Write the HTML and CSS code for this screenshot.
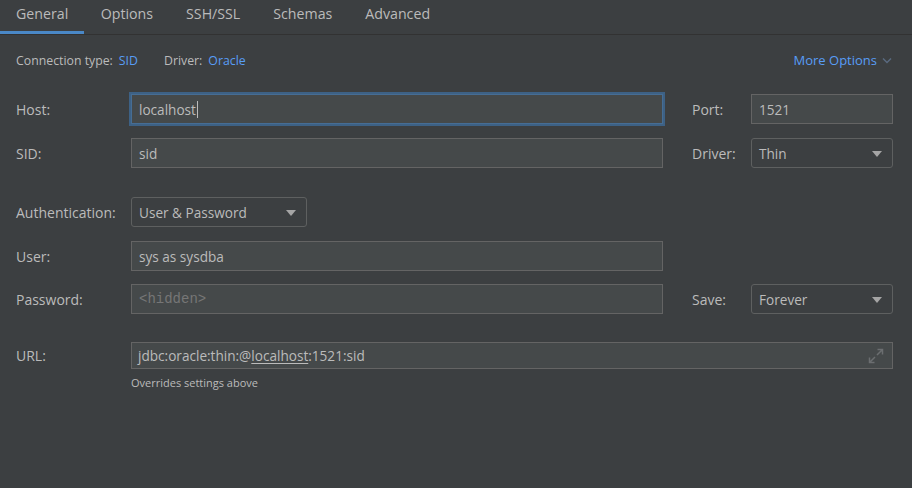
FILE: index.html
```html
<!DOCTYPE html>
<html>
<head>
<meta charset="utf-8">
<link rel="stylesheet" href="styles.css">
</head>
<body>
<div class="tabs">
  <div class="tab active">General</div>
  <div class="tab">Options</div>
  <div class="tab">SSH/SSL</div>
  <div class="tab">Schemas</div>
  <div class="tab">Advanced</div>
</div>
<div class="content">
  <div class="info">
    <span class="lbl">Connection type:</span><span class="link">SID</span>
    <span class="lbl lbl2">Driver:</span><span class="link">Oracle</span>
    <span class="more">More Options
      <svg class="chev" width="10" height="7" viewBox="0 0 10 7"><path d="M1 1.5 L5 5.5 L9 1.5" fill="none" stroke="#5a6a80" stroke-width="1.4"/></svg>
    </span>
  </div>
  <div class="form">
    <div class="label r1">Host:</div>
    <div class="field focus r1">localhost<span class="caret"></span></div>
    <div class="label2 r1">Port:</div>
    <div class="field r1 c4">1521</div>

    <div class="label r2">SID:</div>
    <div class="field r2">sid</div>
    <div class="label2 r2">Driver:</div>
    <div class="select r2 c4">Thin<span class="tri"></span></div>

    <div class="label r3">Authentication:</div>
    <div class="r3 authwrap"><div class="select auth">User &amp; Password<span class="tri"></span></div></div>

    <div class="label r4">User:</div>
    <div class="field r4">sys as sysdba</div>

    <div class="label r5">Password:</div>
    <div class="field r5 ph">&lt;hidden&gt;</div>
    <div class="label2 r5">Save:</div>
    <div class="select r5 c4">Forever<span class="tri"></span></div>

    <div class="label r6">URL:</div>
    <div class="field url r6">jdbc:oracle:thin:@<u>localhost</u>:1521:sid
      <svg class="expand" width="16" height="16" viewBox="0 0 16 16"><g fill="none" stroke="#6b6e70" stroke-width="1.5"><path d="M9.5 1.5 H14.5 V6.5 M14.5 1.5 L9 7"/><path d="M1.5 9.5 V14.5 H6.5 M1.5 14.5 L7 9"/></g></svg>
    </div>
    <div class="hint r7">Overrides settings above</div>
  </div>
</div>
</body>
</html>
```

FILE: styles.css
```css
html, body {
  margin: 0;
  padding: 0;
  background: #3c3f41;
  width: 912px;
  height: 488px;
  overflow: hidden;
  font-family: "Open Sans", "Noto Sans", sans-serif;
  color: #bbbbbb;
  font-size: 14px;
}
.tabs {
  display: flex;
  height: 34px;
  border-bottom: 1px solid #323232;
}
.tab {
  padding: 0 16.5px;
  line-height: 28px;
  height: 31px;
  border-bottom: 3px solid transparent;
  font-size: 14.2px;
}
.tab.active {
  padding: 0 16px;
  border-bottom-color: #4a88c7;
}
.content {
  padding: 0 19px 0 16px;
}
.info {
  display: flex;
  align-items: center;
  height: 50px;
  font-size: 12.3px;
}
.info .lbl { margin-right: 6px; }
.info .lbl2 { margin-left: 26px; }
.link { color: #589df6; }
.more {
  margin-left: auto;
  color: #589df6;
  font-size: 13px;
  display: flex;
  align-items: center;
  gap: 5px;
  margin-right: 1px;
}
.chev { margin-top: 1px; }
.form {
  display: grid;
  grid-template-columns: 115px 532px 29px 59px 142px;
  grid-template-rows: 30px 14px 30px 29px 30px 14px 30px 13px 30px 28px 27px 6px 16px;
  margin-top: 9px;
}
.r1 { grid-row: 1; }
.r2 { grid-row: 3; }
.r3 { grid-row: 5; }
.r4 { grid-row: 7; }
.r5 { grid-row: 9; }
.r6 { grid-row: 11; }
.r7 { grid-row: 13; }
.label { grid-column: 1; display: flex; align-items: center; }
.label2 { grid-column: 4; display: flex; align-items: center; }
.field, .select {
  grid-column: 2;
  box-sizing: border-box;
  background: #45494a;
  border: 1px solid #646464;
  display: flex;
  align-items: center;
  padding-left: 7px;
  font-size: 13.6px;
  color: #bbbbbb;
  position: relative;
}
.c4 { grid-column: 5; }
.field.focus {
  border-color: #466d94;
  box-shadow: 0 0 0 2px #3d6185;
}
.caret {
  display: inline-block;
  width: 1px;
  height: 17px;
  background: #bbbbbb;
  margin-left: 1px;
}
.select {
  border-radius: 3px;
  background: #3c3f41;
  border-color: #5e6060;
}
.tri {
  position: absolute;
  right: 10px;
  top: 12px;
  width: 0;
  height: 0;
  border-left: 5px solid transparent;
  border-right: 5px solid transparent;
  border-top: 6px solid #a5a5a5;
}
.authwrap { grid-column: 2; display: flex; }
.auth { width: 176px; height: 30px; }
.ph {
  font-family: "Liberation Mono", "DejaVu Sans Mono", monospace;
  color: #767676;
  font-size: 14px;
}
.url {
  grid-column: 2 / 6;
  padding-left: 6px;
}
.url u { text-underline-offset: 2px; }
.expand {
  position: absolute;
  right: 8px;
  top: 5px;
}
.hint {
  grid-column: 2 / 6;
  font-size: 11px;
  line-height: 16px;
}
```
